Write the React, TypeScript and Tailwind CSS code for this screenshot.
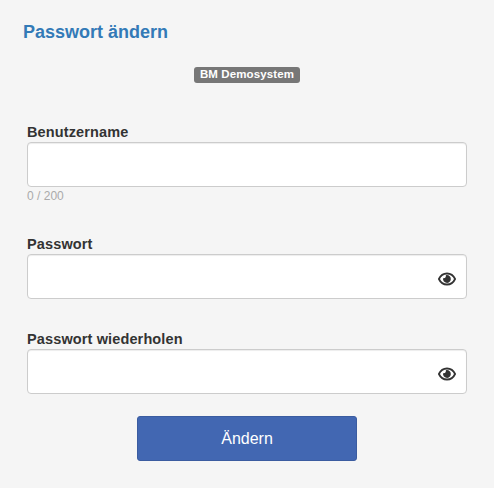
import { useState } from 'react';

// CONSTANTS
const MAX_USERNAME = 200;

function EyeIcon() {
  return (
    <svg viewBox="0 0 18 14" className="h-3.5 w-[18px]" aria-hidden="true">
      <path
        d="M0.9 7C2.6 3.3 5.6 1.5 9 1.5S15.4 3.3 17.1 7C15.4 10.7 12.4 12.5 9 12.5S2.6 10.7 0.9 7Z"
        fill="none"
        stroke="#333333"
        strokeWidth="1.8"
        strokeLinejoin="round"
      />
      <path
        d="M8.8 3.1A3.9 3.9 0 1 1 5.1 6.2L6.9 6Q8.1 5.2 7.9 3.3Z"
        fill="#333333"
      />
    </svg>
  );
}

function Field({
  id,
  label,
  value,
  onChange,
  secret = false,
  maxLength,
}: {
  id: string;
  label: string;
  value: string;
  onChange: (value: string) => void;
  secret?: boolean;
  maxLength?: number;
}) {
  const [visible, setVisible] = useState(false);

  return (
    <div>
      <label
        htmlFor={id}
        className="block text-[14.5px] leading-5 font-bold tracking-[0.13px]"
      >
        {label}
      </label>
      <div className="relative">
        <input
          id={id}
          type={secret && !visible ? 'password' : 'text'}
          value={value}
          maxLength={maxLength}
          onChange={(e) => onChange(e.target.value)}
          className="block h-[45px] w-full rounded border border-[#cccccc] bg-white px-3 text-base shadow-[inset_0_1px_1px_rgba(0,0,0,0.075)] focus:border-[#66afe9] focus:outline-none"
        />
        {secret && (
          <button
            type="button"
            aria-label={label}
            onClick={() => setVisible((v) => !v)}
            className="absolute top-[18px] right-[11px] cursor-pointer"
          >
            <EyeIcon />
          </button>
        )}
      </div>
      {maxLength && (
        <p className="pt-px text-xs leading-4 text-[#aaaaaa]">
          {value.length} / {maxLength}
        </p>
      )}
    </div>
  );
}

export default function App() {
  // FORM STATES
  const [username, setUsername] = useState('');
  const [password, setPassword] = useState('');
  const [repeat, setRepeat] = useState('');

  return (
    <main className="min-h-screen bg-[#f5f5f5] px-[27px] pt-[22px] font-['Liberation_Sans',Arial,sans-serif] text-[#333333]">
      <h1 className="-ml-1 text-lg leading-5 font-bold text-[#337ab7]">
        Passwort ändern
      </h1>

      <div className="mt-[25px] flex justify-center">
        <span className="h-4 rounded-[3px] bg-[#777777] px-1.5 text-[11.5px] leading-[15px] font-bold tracking-[0.12px] text-white">
          BM Demosystem
        </span>
      </div>

      <form
        onSubmit={(e) => e.preventDefault()}
        className="mt-[39px] flex flex-col gap-[30px]"
      >
        <Field
          id="username"
          label="Benutzername"
          value={username}
          onChange={setUsername}
          maxLength={MAX_USERNAME}
        />
        <Field
          id="password"
          label="Passwort"
          value={password}
          onChange={setPassword}
          secret
        />
        <Field
          id="repeat"
          label="Passwort wiederholen"
          value={repeat}
          onChange={setRepeat}
          secret
        />
        <button
          type="submit"
          className="-mt-2 h-[45px] w-[220px] cursor-pointer self-center rounded-[3px] border border-[#3b5ca0] bg-[#4267b2] text-base text-white"
        >
          Ändern
        </button>
      </form>
    </main>
  );
}
